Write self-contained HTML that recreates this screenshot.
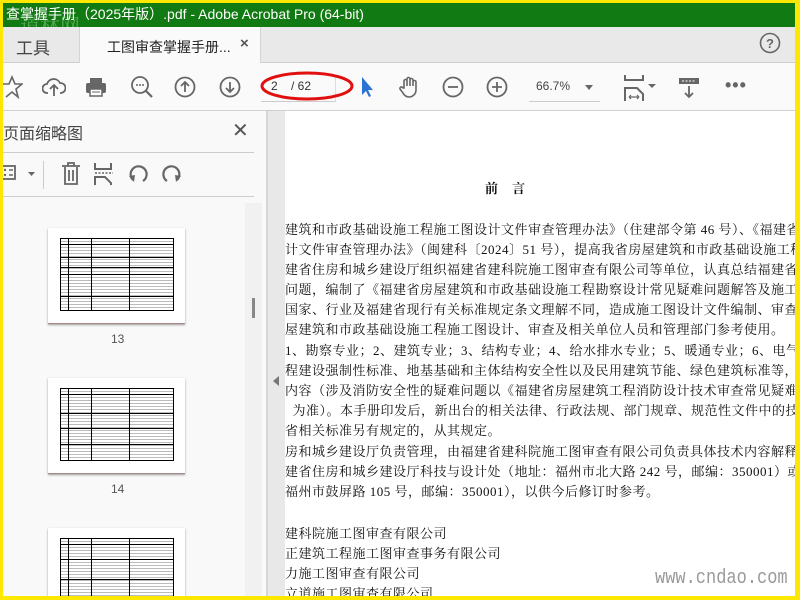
<!DOCTYPE html>
<html><head><meta charset="utf-8"><style>
*{margin:0;padding:0;box-sizing:border-box}
html,body{width:800px;height:600px;overflow:hidden}
body{background:#ffe800;position:relative;font-family:"Liberation Sans","Noto Sans CJK SC",sans-serif}
.abs{position:absolute}
#title{left:3px;top:3px;width:792px;height:24px;background:#127a12;color:#fff;font-size:14px;line-height:22px;padding-left:3px}
#tabs{left:3px;top:27px;width:792px;height:36px;background:#e9e9e9;border-bottom:1px solid #cfcfcf}
#tb{left:3px;top:63px;width:792px;height:48px;background:#fafafa;border-bottom:1px solid #d0d0d0}
#panel{left:3px;top:111px;width:264px;height:485px;background:#f9f9f9;border-right:1px solid #d6d6d6;overflow:hidden}
#gap{left:268px;top:111px;width:17px;height:485px;background:#e8e8e8}
#page{left:285px;top:111px;width:510px;height:485px;background:#fff;overflow:hidden}
.ln{position:absolute;left:0;white-space:nowrap;font-family:"Liberation Serif","Noto Serif CJK SC",serif;font-size:13px;color:#111;letter-spacing:0.5px}
.ic{position:absolute}
.thumb{position:absolute;left:48px;width:137px;height:96px;background:#fff;box-shadow:0 1px 2px #999;border-bottom:1px solid #a88}
.tbl{position:absolute;left:12px;top:10px;width:114px;height:73px;border:1px solid #000;background:repeating-linear-gradient(#fff 0 2px,#bbb 2px 3px)}
.tbl i{position:absolute;top:0;bottom:0;border-left:1px solid #000}
.tbl b{position:absolute;left:0;right:0;border-top:1px solid #000}
.lab{position:absolute;left:108px;font-size:12px;color:#555}
</style></head><body>
<div id="title" class="abs">查掌握手册（2025年版）.pdf - Adobe Acrobat Pro (64-bit)</div>
<div class="abs" style="left:20px;top:10px;font-size:20px;color:rgba(200,255,200,0.35);font-family:'Noto Serif CJK SC',serif">道林网</div>
<div id="tabs" class="abs">
 <div class="abs" style="left:13px;top:7px;font-size:17px;color:#444">工具</div>
 <div class="abs" style="left:76px;top:0;width:182px;height:36px;background:#fafafa;border-left:1px solid #d4d4d4;border-right:1px solid #d4d4d4"></div>
 <div class="abs" style="left:104px;top:10px;font-size:14px;color:#222">工图审查掌握手册...</div>
 <div class="abs" style="left:237px;top:8px;font-size:15px;color:#555;font-weight:bold">×</div>
 <svg class="abs" style="left:756px;top:5px" width="22" height="22"><circle cx="11" cy="11" r="9.5" fill="none" stroke="#666" stroke-width="1.6"/><text x="11" y="16" font-size="13" text-anchor="middle" fill="#666" font-weight="bold" font-family="Liberation Sans">?</text></svg>
</div>
<div id="tb" class="abs">
 <svg class="ic" style="left:0;top:12px" width="20" height="24"><path d="M-2 9 L6 9 L9 2 L12 9 L19 9 L13 14 L15 22 L9 17 L3 22" fill="none" stroke="#666" stroke-width="1.6"/></svg>
 <svg class="ic" style="left:39px;top:12px" width="24" height="24"><path d="M6 18 H5 A4.5 4.5 0 0 1 5 9 A7 7 0 0 1 18 8 A5 5 0 0 1 19 18 H18" fill="none" stroke="#666" stroke-width="1.8"/><path d="M12 21 V11 M8 14 L12 10 L16 14" fill="none" stroke="#666" stroke-width="1.8"/></svg>
 <svg class="ic" style="left:81px;top:12px" width="24" height="24"><rect x="6" y="3" width="12" height="5" fill="#666"/><rect x="2" y="8" width="20" height="10" rx="2" fill="#666"/><rect x="6" y="14" width="12" height="7" fill="#fff" stroke="#666" stroke-width="1.5"/><line x1="8" y1="17" x2="16" y2="17" stroke="#666"/></svg>
 <svg class="ic" style="left:126px;top:12px" width="26" height="26"><circle cx="11" cy="10" r="8" fill="none" stroke="#666" stroke-width="1.8"/><path d="M17 16 L23 22" stroke="#666" stroke-width="2.2"/><circle cx="8" cy="10" r="1" fill="#666"/><circle cx="11" cy="10" r="1" fill="#666"/><circle cx="14" cy="10" r="1" fill="#666"/></svg>
 <svg class="ic" style="left:171px;top:13px" width="22" height="22"><circle cx="11" cy="11" r="9.5" fill="none" stroke="#666" stroke-width="1.8"/><path d="M11 16 V6 M7 10 L11 6 L15 10" fill="none" stroke="#666" stroke-width="1.8"/></svg>
 <svg class="ic" style="left:216px;top:13px" width="22" height="22"><circle cx="11" cy="11" r="9.5" fill="none" stroke="#666" stroke-width="1.8"/><path d="M11 6 V16 M7 12 L11 16 L15 12" fill="none" stroke="#666" stroke-width="1.8"/></svg>
 <div class="abs" style="left:258px;top:13px;width:75px;height:26px;border-bottom:1px solid #ccc;border-right:1px solid #ddd"></div>
 <div class="abs" style="left:268px;top:16px;font-size:12px;color:#333">2&nbsp;&nbsp;&nbsp;&nbsp;/ 62</div>
 <svg class="abs" style="left:256px;top:6px" width="100" height="34"><ellipse cx="48" cy="17" rx="45" ry="13" fill="none" stroke="#e01010" stroke-width="3"/></svg>
 <svg class="ic" style="left:356px;top:12px" width="16" height="24"><path d="M3 2 L3 20 L7 16 L10 22 L12 21 L9 15 L14 15 Z" fill="#2a72d4"/></svg>
 <svg class="ic" style="left:395px;top:11px" width="26" height="26"><path d="M6 14 V7 a1.5 1.5 0 0 1 3 0 V12 V5 a1.5 1.5 0 0 1 3 0 V12 V6 a1.5 1.5 0 0 1 3 0 V12 V8 a1.5 1.5 0 0 1 3 0 V16 a7 7 0 0 1 -7 7 a7 7 0 0 1 -6 -4 L2 15 a1.5 1.5 0 0 1 3 -1 Z" fill="none" stroke="#666" stroke-width="1.6"/></svg>
 <svg class="ic" style="left:439px;top:13px" width="22" height="22"><circle cx="11" cy="11" r="9.5" fill="none" stroke="#666" stroke-width="1.8"/><path d="M6 11 H16" stroke="#666" stroke-width="1.8"/></svg>
 <svg class="ic" style="left:483px;top:13px" width="22" height="22"><circle cx="11" cy="11" r="9.5" fill="none" stroke="#666" stroke-width="1.8"/><path d="M6 11 H16 M11 6 V16" stroke="#666" stroke-width="1.8"/></svg>
 <div class="abs" style="left:526px;top:13px;width:71px;height:26px;border-bottom:1px solid #ccc"></div>
 <div class="abs" style="left:533px;top:16px;font-size:12px;color:#444">66.7%</div>
 <div class="abs" style="left:582px;top:22px;border:4px solid transparent;border-top:5px solid #666"></div>
 <svg class="ic" style="left:620px;top:11px" width="36" height="28"><path d="M2 1 V6 H20 V1 M2 27 V14 H14 L20 20 V27" fill="none" stroke="#666" stroke-width="2"/><path d="M6 23 H16 M6 23 l2 -2 M6 23 l2 2 M16 23 l-2 -2 M16 23 l-2 2" stroke="#666" stroke-width="1.2" fill="none"/><path d="M25 10 L33 10 L29 14 Z" fill="#666"/></svg>
 <svg class="ic" style="left:674px;top:13px" width="24" height="24"><rect x="2" y="2" width="20" height="6" fill="#666"/><path d="M5 5 H19" stroke="#fff" stroke-dasharray="2 1.5"/><path d="M12 10 V21 M8 17 L12 21 L16 17" fill="none" stroke="#666" stroke-width="1.8"/></svg>
 <div class="abs" style="left:722px;top:12px;font-size:18px;color:#666;letter-spacing:1px;font-weight:bold">•••</div>
</div>
<div id="panel" class="abs">
 <div class="abs" style="left:0;top:9px;font-size:16px;color:#444">页面缩略图</div>
 <div class="abs" style="left:229px;top:7px;font-size:20px;color:#555">✕</div>
 <div class="abs" style="left:0;top:41px;width:251px;border-top:1px solid #ccc"></div>
 <svg class="abs" style="left:0;top:50px" width="34" height="24"><rect x="-4" y="5" width="16" height="13" fill="none" stroke="#666" stroke-width="1.8"/><circle cx="2" cy="9" r="1.2" fill="#666"/><circle cx="2" cy="14" r="1.2" fill="#666"/><path d="M6 9 H10 M6 14 H10" stroke="#666" stroke-width="1.6"/><path d="M25 11 L32 11 L28.5 15 Z" fill="#666"/></svg>
 <div class="abs" style="left:40px;top:50px;height:28px;border-left:1px solid #ccc"></div>
 <svg class="abs" style="left:57px;top:50px" width="24" height="26"><path d="M2 5 H20 M8 5 V2 H14 V5 M5 6 V23 H17 V6 M9 9 V20 M13 9 V20" fill="none" stroke="#666" stroke-width="1.8"/></svg>
 <svg class="abs" style="left:90px;top:50px" width="24" height="26"><path d="M2 2 V8 H18 V2 M2 24 V16 H12 L18 22 V24" fill="none" stroke="#666" stroke-width="2"/><path d="M2 12 H20" stroke="#666" stroke-dasharray="2 1.5" stroke-width="1.5"/></svg>
 <svg class="abs" style="left:123px;top:51px" width="24" height="24"><path d="M7 18 A8 8 0 1 1 17 19" fill="none" stroke="#666" stroke-width="2.2"/><path d="M3 14 L8 20 L9 13 Z" fill="#666"/></svg>
 <svg class="abs" style="left:157px;top:51px" width="24" height="24"><path d="M17 18 A8 8 0 1 0 7 19" fill="none" stroke="#666" stroke-width="2.2"/><path d="M21 14 L16 20 L15 13 Z" fill="#666"/></svg>
 <div class="abs" style="left:0;top:85px;width:251px;border-top:1px solid #ccc"></div>
 <div class="abs" style="left:242px;top:92px;width:17px;height:393px;background:#f1f1f1"></div>
 <div class="abs" style="left:249px;top:187px;width:3px;height:20px;background:#888"></div>
 <div class="thumb" style="top:117px;left:45px"><div class="tbl"><i style="left:7px"></i><i style="left:30px"></i><i style="left:68px"></i><b style="top:5px"></b><b style="top:18px"></b><b style="top:28px"></b><b style="top:35px"></b><b style="top:57px"></b></div></div>
 <div class="lab" style="top:221px">13</div>
 <div class="thumb" style="top:267px;left:45px"><div class="tbl"><i style="left:7px"></i><i style="left:30px"></i><i style="left:68px"></i><b style="top:5px"></b><b style="top:24px"></b><b style="top:39px"></b><b style="top:55px"></b></div></div>
 <div class="lab" style="top:371px">14</div>
 <div class="thumb" style="top:417px;left:45px;height:80px"><div class="tbl" style="height:80px"><i style="left:7px"></i><i style="left:30px"></i><i style="left:68px"></i><b style="top:5px"></b><b style="top:20px"></b><b style="top:40px"></b><b style="top:57px"></b></div></div>
</div>
<div id="gap" class="abs"><div class="abs" style="left:5px;top:265px;border:5px solid transparent;border-right:6px solid #777;border-left:0"></div></div>
<div id="page" class="abs">
 <div class="ln" style="left:200px;top:67px;font-weight:bold;font-size:13px;letter-spacing:14px">前言</div>
 <div class="ln" style="top:108px">建筑和市政基础设施工程施工图设计文件审查管理办法》（住建部令第 46 号）、《福建省房屋建筑</div>
 <div class="ln" style="top:128px">计文件审查管理办法》（闽建科〔2024〕51 号），提高我省房屋建筑和市政基础设施工程施工图设计</div>
 <div class="ln" style="top:148px">建省住房和城乡建设厅组织福建省建科院施工图审查有限公司等单位，认真总结福建省近年来勘察</div>
 <div class="ln" style="top:168px">问题，编制了《福建省房屋建筑和市政基础设施工程勘察设计常见疑难问题解答及施工图审查掌握</div>
 <div class="ln" style="top:188px">国家、行业及福建省现行有关标准规定条文理解不同，造成施工图设计文件编制、审查等环节掌握</div>
 <div class="ln" style="top:208px">屋建筑和市政基础设施工程施工图设计、审查及相关单位人员和管理部门参考使用。</div>
 <div class="ln" style="top:229px">1、勘察专业；2、建筑专业；3、结构专业；4、给水排水专业；5、暖通专业；6、电气专业；7、</div>
 <div class="ln" style="top:249px">程建设强制性标准、地基基础和主体结构安全性以及民用建筑节能、绿色建筑标准等，但不包括</div>
 <div class="ln" style="top:269px">内容（涉及消防安全性的疑难问题以《福建省房屋建筑工程消防设计技术审查常见疑难问题解答（2</div>
 <div class="ln" style="top:289px">&nbsp;&nbsp;为准）。本手册印发后，新出台的相关法律、行政法规、部门规章、规范性文件中的技术性规定</div>
 <div class="ln" style="top:309px">省相关标准另有规定的，从其规定。</div>
 <div class="ln" style="top:330px">房和城乡建设厅负责管理，由福建省建科院施工图审查有限公司负责具体技术内容解释。在执行过</div>
 <div class="ln" style="top:350px">建省住房和城乡建设厅科技与设计处（地址：福州市北大路 242 号，邮编：350001）或福建省建科</div>
 <div class="ln" style="top:370px">福州市鼓屏路 105 号，邮编：350001），以供今后修订时参考。</div>
 <div class="ln" style="top:412px">建科院施工图审查有限公司</div>
 <div class="ln" style="top:432px">正建筑工程施工图审查事务有限公司</div>
 <div class="ln" style="top:452px">力施工图审查有限公司</div>
 <div class="ln" style="top:472px">立道施工图审查有限公司</div>
 <div class="abs" style="left:370px;top:456px;font-size:20px;color:#9a9a9a;font-family:'Liberation Mono',monospace;transform:scaleX(0.85);transform-origin:left">www.cndao.com</div>
</div>
</body></html>
